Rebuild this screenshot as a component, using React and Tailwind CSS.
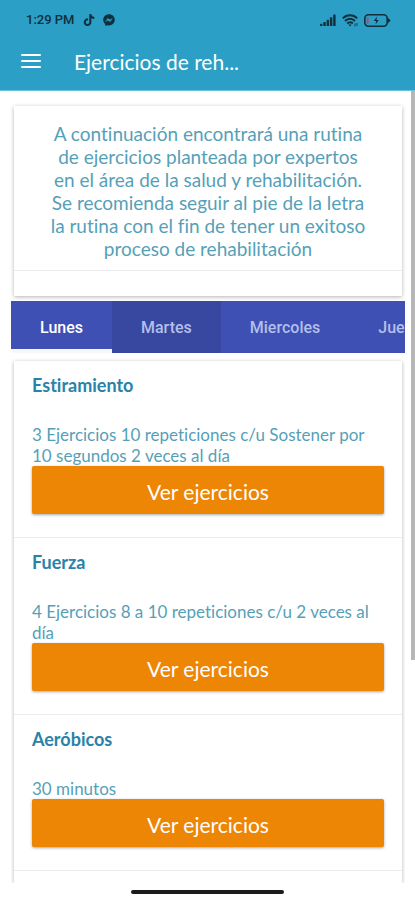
import React from "react";
import { FaFacebookMessenger, FaTiktok } from "react-icons/fa6";

const days = ["Lunes", "Martes", "Miercoles", "Jueves", "Viernes"];

const routines = [
  {
    title: "Estiramiento",
    detail: "3 Ejercicios 10 repeticiones c/u Sostener por 10 segundos 2 veces al día",
  },
  { title: "Fuerza", detail: "4 Ejercicios 8 a 10 repeticiones c/u 2 veces al día" },
  { title: "Aeróbicos", detail: "30 minutos" },
];

function StatusBar() {
  return (
    <div className="flex h-10 items-center justify-between pl-[26px] pr-6 text-[#10303d]">
      <div className="flex items-center gap-2">
        <span className="font-[Roboto,sans-serif] text-[13px] leading-4 font-medium">1:29 PM</span>
        <FaTiktok className="size-3" />
        <FaFacebookMessenger className="size-3" />
      </div>
      <div className="flex items-center gap-[6px]">
        <svg width="16" height="12" viewBox="0 0 16 12" fill="currentColor" aria-hidden="true">
          <rect x="0" y="9.8" width="2.4" height="2.2" rx="0.6" />
          <rect x="3.3" y="8" width="2.4" height="4" rx="0.6" />
          <rect x="6.6" y="5.8" width="2.4" height="6.2" rx="0.6" />
          <rect x="9.9" y="3.2" width="2.4" height="8.8" rx="0.6" />
          <rect x="13.2" y="0.4" width="2.4" height="11.6" rx="0.6" />
        </svg>
        <svg width="16" height="13" viewBox="0 0 16 13" fill="none" stroke="currentColor" strokeWidth="1.9" aria-hidden="true">
          <path d="M0.8 4.4C4.6 0.2 11.4 0.2 15.2 4.4" />
          <path d="M3 7C5.8 4 10.2 4 13 7" />
          <path d="M5.2 9.5C6.8 7.8 9.2 7.8 10.8 9.5" />
          <path d="M6.4 10.4H9.6L8 12.4Z" fill="currentColor" stroke="none" />
          <path d="M13 9.5V12.5M15 9V12" strokeWidth="0.8" />
        </svg>
        <svg width="27" height="13" viewBox="0 0 27 13" fill="none" aria-hidden="true">
          <rect x="0.8" y="0.8" width="22.4" height="11.4" rx="3.6" stroke="currentColor" strokeWidth="1.6" />
          <path d="M23.6 3.6L26.6 6.5L23.6 9.4Z" fill="currentColor" />
          <rect x="2.6" y="3" width="2" height="7" rx="0.8" fill="#a0566b" />
          <path d="M13 2.6L9.8 7H12.2L11.5 10.4L14.8 6H12.4Z" fill="currentColor" />
        </svg>
      </div>
    </div>
  );
}

function Routine({ title, detail }) {
  return (
    <section className="border-b border-[#ececec] px-[18px] pt-[14px] pb-[23px]">
      <h2 className="text-lg leading-[21px] font-bold text-[#2a82a8]">{title}</h2>
      <p className="mt-7 text-[17px] leading-[21px] text-[#569fb8]">{detail}</p>
      <button
        type="button"
        className="block h-12 w-full rounded-[2px] bg-[#ed8505] pt-1 text-[21px] text-white shadow-[0_1px_3px_rgba(0,0,0,0.35)]"
      >
        Ver ejercicios
      </button>
    </section>
  );
}

export default function App() {
  return (
    <div className="flex h-screen flex-col overflow-hidden bg-white font-[Lato,sans-serif] [font-variant-ligatures:none]">
      <header className="border-b border-[#6fc0db] bg-[#2b9fc5]">
        <StatusBar />
        <div className="flex h-[50px] items-start gap-[33px] pl-[21px]">
          <button type="button" aria-label="Menú" className="mt-[14px] flex w-5 flex-col gap-1">
            <span className="h-[2px] rounded bg-white" />
            <span className="h-[2px] rounded bg-white" />
            <span className="h-[2px] rounded bg-white" />
          </button>
          <h1 className="mt-2 text-[21px] leading-7 text-white">Ejercicios de reh...</h1>
        </div>
      </header>

      <div className="relative min-h-0 flex-1 overflow-hidden">
        <div className="absolute top-0 right-0 h-[569px] w-1 bg-[#b7b7b7]" />
        <div className="flex h-full flex-col pr-[10px] pl-[11px]">
          <div className="mx-[3px] mt-[15px] shrink-0 bg-white pb-[25px] shadow-[0_1px_4px_rgba(0,0,0,0.3)]">
            <p className="border-b border-[#ececec] px-[33px] pt-4 pb-[10px] text-center text-[19px] leading-[23px] text-[#569fb8]">
              A continuación encontrará una rutina de ejercicios planteada por expertos en el área de
              la salud y rehabilitación. Se recomienda seguir al pie de la letra la rutina con el fin
              de tener un exitoso proceso de rehabilitación
            </p>
          </div>

          <nav className="mt-[5px] flex h-[52px] shrink-0 overflow-hidden bg-[#3f50b5] font-[Roboto,sans-serif] text-base font-medium">
            {days.map((day, i) => (
              <button
                key={day}
                type="button"
                className={
                  i === 0
                    ? "shrink-0 border-b-4 border-[#f8f8fb] px-[29px] pt-1.5 text-white"
                    : i === 1
                      ? "shrink-0 bg-[#38479f] px-[29px] pt-0.5 text-[#b3bfeb]"
                      : "shrink-0 px-[29px] pt-0.5 text-[#b3bfeb]"
                }
              >
                {day}
              </button>
            ))}
          </nav>

          <main className="min-h-0 flex-1 overflow-hidden pt-2">
            <div className="mx-[3px] h-full bg-white shadow-[0_1px_4px_rgba(0,0,0,0.3)]">
              {routines.map((r) => (
                <Routine key={r.title} title={r.title} detail={r.detail} />
              ))}
            </div>
          </main>
        </div>
      </div>

      <footer className="flex h-[17px] shrink-0 justify-center bg-white pt-[7px]">
        <div className="h-1 w-[153px] rounded-full bg-[#1b1b1b]" />
      </footer>
    </div>
  );
}
